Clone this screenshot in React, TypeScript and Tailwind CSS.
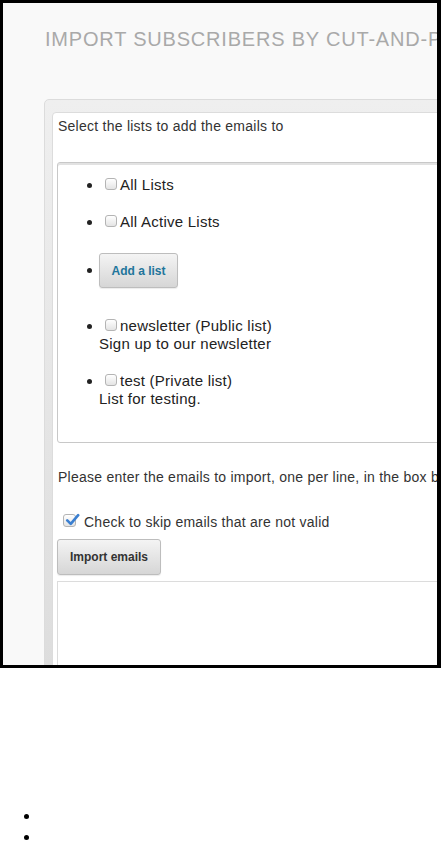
const font = { fontFamily: '"Liberation Sans", Arial, sans-serif' };

function Box() {
  return (
    <span className="mt-[1px] inline-block h-[12px] w-[12px] shrink-0 rounded-[3px] border border-[#b4b4b4] bg-gradient-to-b from-white to-[#e4e4e4]" />
  );
}

function CheckedBox() {
  return (
    <span className="relative inline-block h-[13px] w-[13px] shrink-0 rounded-[3px] border border-[#b4b4b4] bg-gradient-to-b from-white to-[#e4e4e4]">
      <svg viewBox="0 0 16 16" className="absolute -top-[2px] left-[1px] h-[14px] w-[15px]">
        <path d="M2 8.5 L6 12.5 L14.5 2.5" fill="none" stroke="#3b7fd0" strokeWidth="3" strokeLinecap="round" strokeLinejoin="round" />
      </svg>
    </span>
  );
}

function Dot() {
  return <span className="ml-[29px] mt-[7px] inline-block h-[5px] w-[5px] shrink-0 rounded-full bg-[#222]" />;
}

type ListItem = { name: string; kind?: string; note?: string };

const lists: ListItem[] = [
  { name: 'newsletter', kind: 'Public list', note: 'Sign up to our newsletter' },
  { name: 'test', kind: 'Private list', note: 'List for testing.' },
];

function CheckRow({ label, note }: { label: string; note?: string }) {
  return (
    <li className="flex items-start">
      <Dot />
      <div className="ml-[7px] flex flex-col">
        <div className="flex items-start">
          <span className="ml-[6px]">
            <Box />
          </span>
          <span className="ml-[3px]">{label}</span>
        </div>
        {note && <span>{note}</span>}
      </div>
    </li>
  );
}

export default function App() {
  return (
    <div className="bg-white" style={font}>
      <div className="h-[668px] overflow-hidden border-b-[3px] border-l-[3px] border-r-4 border-t-[3px] border-black bg-[#f9f9f9]">
        <div className="pl-[41px] pt-[25px]">
          <h1 className="ml-[1px] whitespace-nowrap text-[20px] leading-[23px] tracking-[0.8px] text-[#a9a9a9]">
            IMPORT SUBSCRIBERS BY CUT-AND-PASTE
          </h1>

          {/* outer panel */}
          <div className="mt-[48px] h-[700px] w-[480px] rounded-[5px] border border-[#dcdcdc] bg-gradient-to-b from-[#efefef] to-[#d9d9d9] pl-[7px] pt-[12px]">
            <div className="h-full rounded-[4px] border border-[#dcdcdc] bg-white pl-[4px] pt-[6px] text-[14px] leading-[15px] tracking-[0.25px] text-[#333]">
              <p className="whitespace-nowrap pl-[1px]">Select the lists to add the emails to</p>

              <div className="mt-[28px] h-[281px] rounded-[3px] border border-[#c8c8c8] shadow-[inset_0_2px_0_#e2e2e2]">
                <ul className="flex flex-col gap-[19px] pt-[13px] text-[15px] leading-[18px] text-[#222]">
                  <CheckRow label="All Lists" />
                  <CheckRow label="All Active Lists" />
                  <li className="flex h-[48px] items-start">
                    <span className="ml-[29px] mt-[18px] inline-block h-[5px] w-[5px] shrink-0 rounded-full bg-[#222]" />
                    <button className="ml-[7px] mt-[3px] h-[35px] w-[79px] rounded-[3px] border border-[#bdbdbd] bg-gradient-to-b from-[#f4f4f4] to-[#d6d6d6] text-[12px] font-bold tracking-normal text-[#21759b] shadow-[0_1px_1px_rgba(0,0,0,0.08)]">
                      Add a list
                    </button>
                  </li>
                  {lists.map((l) => (
                    <CheckRow key={l.name} label={`${l.name} (${l.kind})`} note={l.note} />
                  ))}
                </ul>
              </div>

              <p className="mt-[27px] whitespace-nowrap pl-[1px]">
                Please enter the emails to import, one per line, in the box below
              </p>

              <label className="mt-[30px] flex items-start whitespace-nowrap">
                <span className="ml-[6px] mt-[-1px]">
                  <CheckedBox />
                </span>
                <span className="ml-[8px]">Check to skip emails that are not valid</span>
              </label>

              <button className="mt-[9px] h-[36px] w-[104px] rounded-[3px] border border-[#bdbdbd] bg-gradient-to-b from-[#f4f4f4] to-[#d6d6d6] text-[12px] font-bold tracking-normal text-[#333] shadow-[0_1px_1px_rgba(0,0,0,0.08)]">
                Import emails
              </button>

              <div className="mt-[6px] h-[200px] border border-[#dcdcdc] bg-white" />
            </div>
          </div>
        </div>
      </div>

      <ul className="mt-[137px] list-disc pl-10 text-[16px] leading-[21px]">
        <li>&nbsp;</li>
        <li>&nbsp;</li>
      </ul>
    </div>
  );
}
